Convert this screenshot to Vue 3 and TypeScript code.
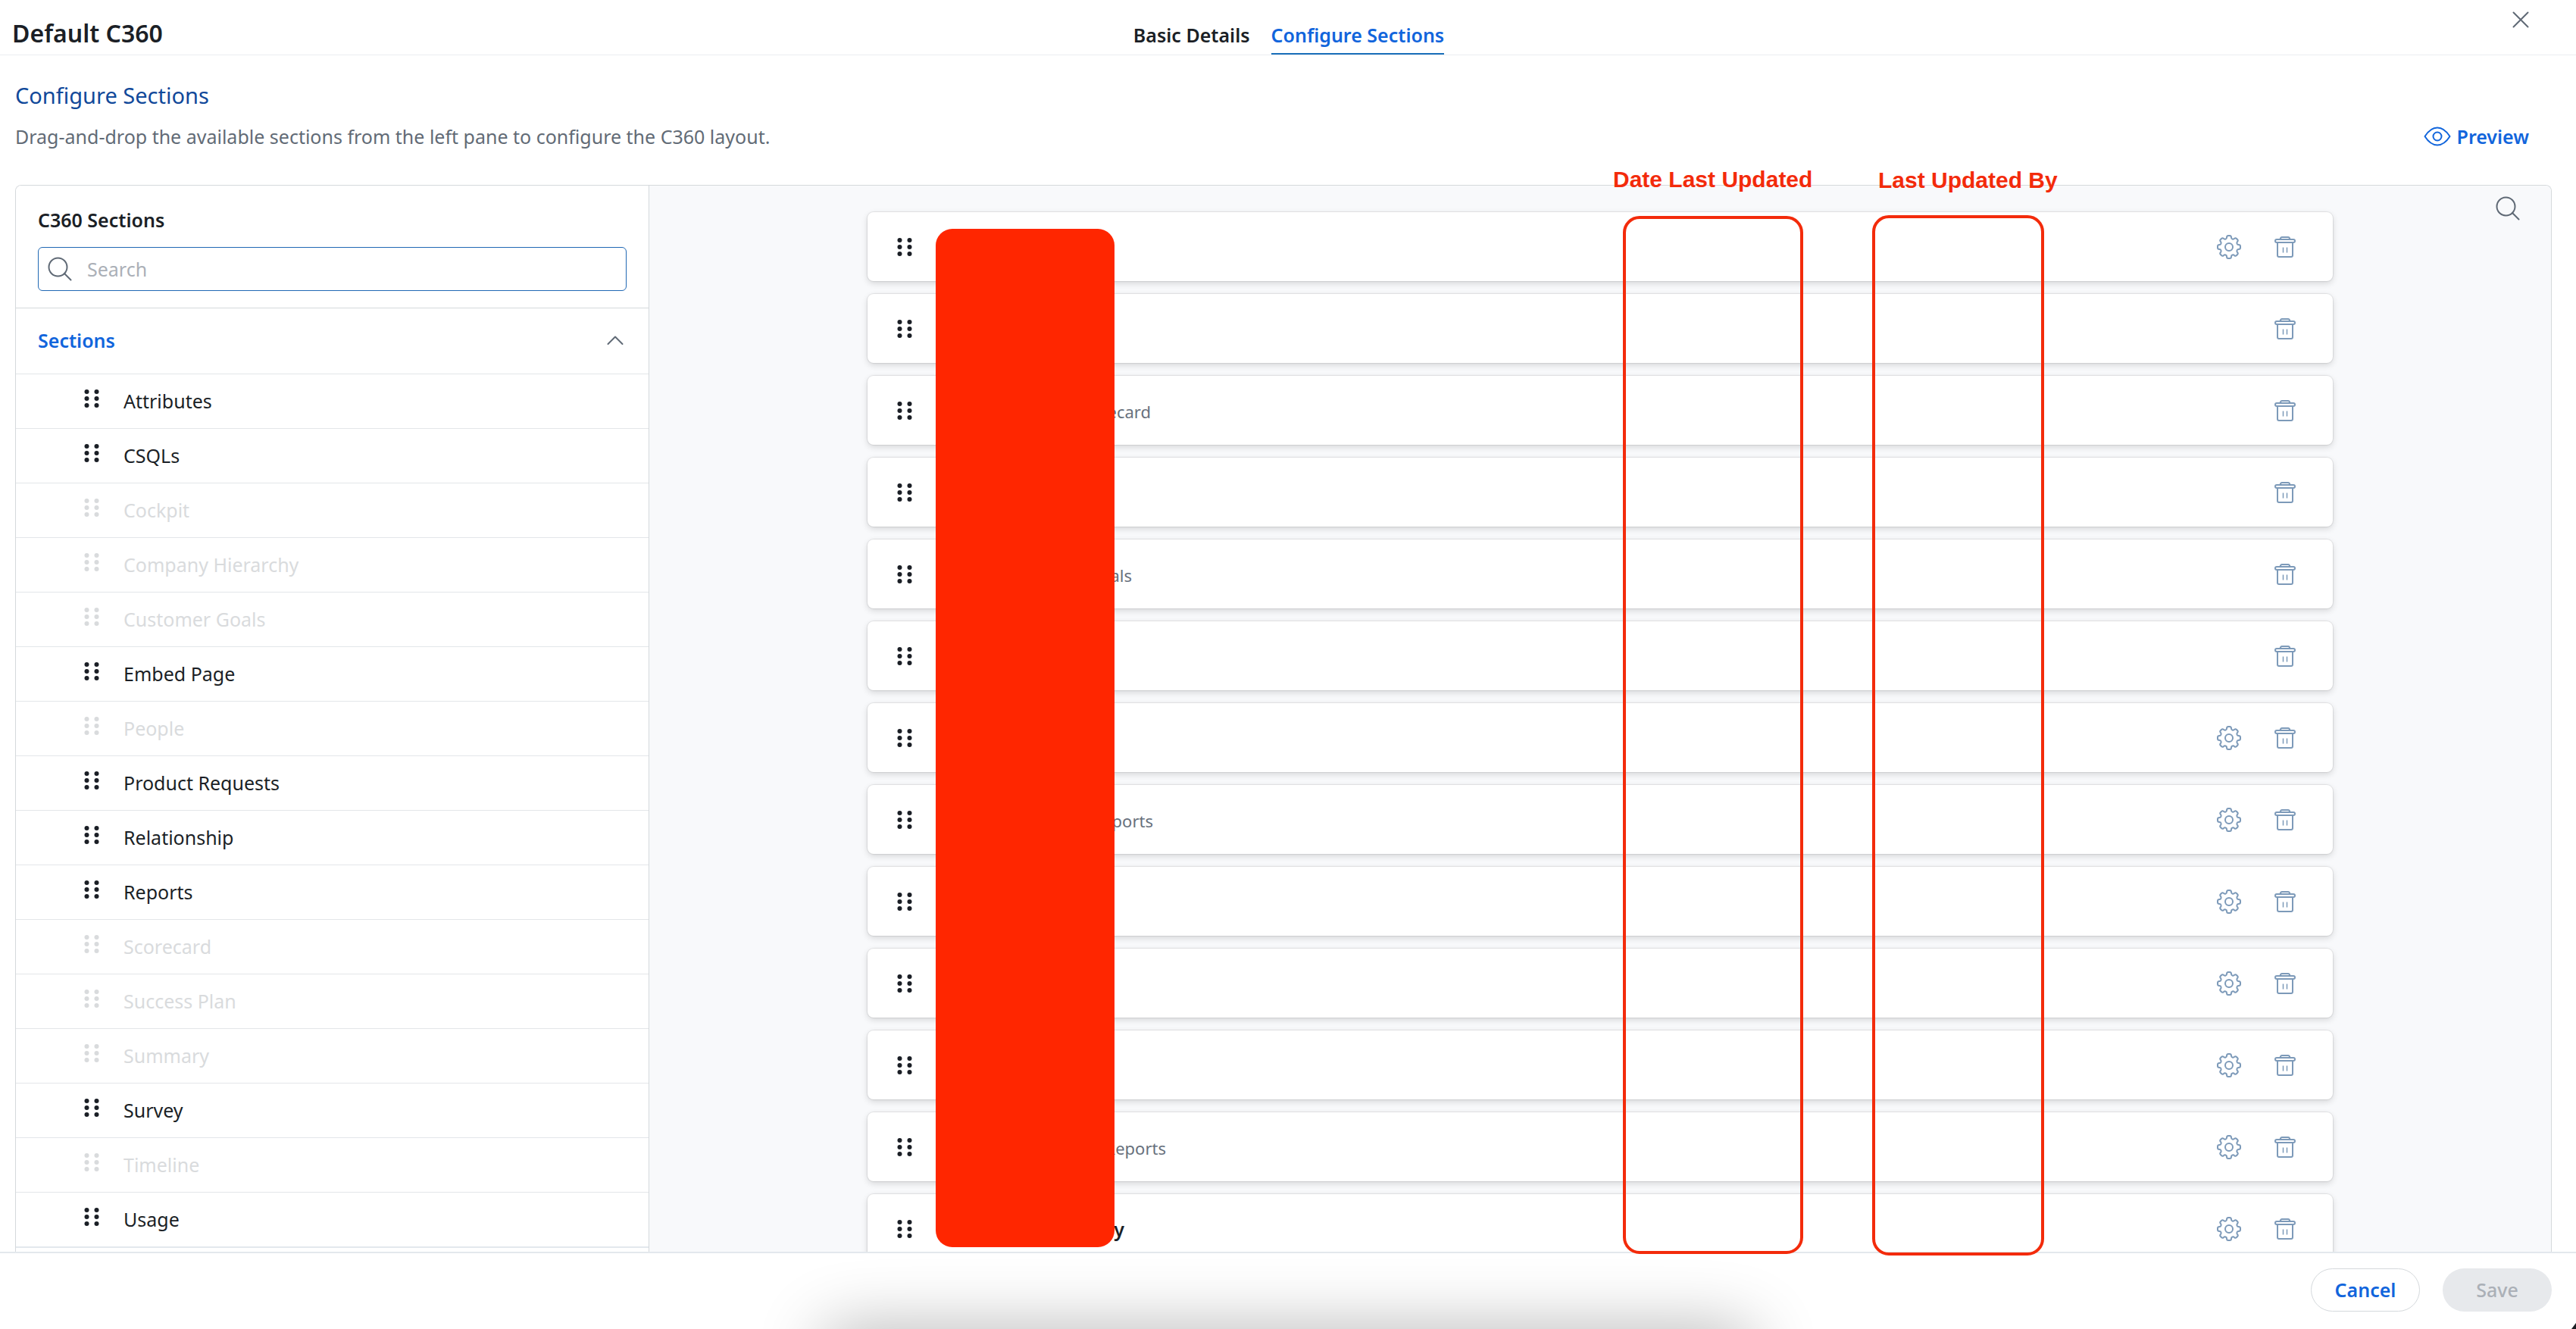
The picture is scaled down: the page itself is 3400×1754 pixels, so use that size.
<script setup lang="ts">
import { ref } from 'vue'

interface Section {
  name: string
  used: boolean
}

interface Card {
  id: number
  label: string
  kind: 'title' | 'note'
  extent: number
  configurable: boolean
}

const query = ref('')

const sections: Section[] = [
  { name: 'Attributes', used: false },
  { name: 'CSQLs', used: false },
  { name: 'Cockpit', used: true },
  { name: 'Company Hierarchy', used: true },
  { name: 'Customer Goals', used: true },
  { name: 'Embed Page', used: false },
  { name: 'People', used: true },
  { name: 'Product Requests', used: false },
  { name: 'Relationship', used: false },
  { name: 'Reports', used: false },
  { name: 'Scorecard', used: true },
  { name: 'Success Plan', used: true },
  { name: 'Summary', used: true },
  { name: 'Survey', used: false },
  { name: 'Timeline', used: true },
  { name: 'Usage', used: false },
]

// extent is the full width of the card's name, including the covered part
const cards: Card[] = [
  { id: 1, label: '', kind: 'note', extent: 0, configurable: true },
  { id: 2, label: '', kind: 'note', extent: 0, configurable: false },
  { id: 3, label: 'ecard', kind: 'note', extent: 273, configurable: false },
  { id: 4, label: '', kind: 'note', extent: 0, configurable: false },
  { id: 5, label: 'als', kind: 'note', extent: 248, configurable: false },
  { id: 6, label: '', kind: 'note', extent: 0, configurable: false },
  { id: 7, label: '', kind: 'note', extent: 0, configurable: true },
  { id: 8, label: 'ports', kind: 'note', extent: 276, configurable: true },
  { id: 9, label: '', kind: 'note', extent: 0, configurable: true },
  { id: 10, label: '', kind: 'note', extent: 0, configurable: true },
  { id: 11, label: '', kind: 'note', extent: 0, configurable: true },
  { id: 12, label: 'Reports', kind: 'note', extent: 293, configurable: true },
  { id: 13, label: 'y', kind: 'title', extent: 238, configurable: true },
]
</script>

<template>
  <div class="page">
    <header class="topbar">
      <h1>Default C360</h1>
      <nav class="tabs">
        <a href="#basic">Basic Details</a>
        <a href="#configure" class="active">Configure Sections</a>
      </nav>
      <button class="icon-btn close" type="button" aria-label="Close">
        <svg width="22" height="22" viewBox="0 0 22 22" fill="none" stroke="currentColor" stroke-width="2" stroke-linecap="round"><path d="M1.5 1.5l19 19M20.5 1.5l-19 19" /></svg>
      </button>
    </header>

    <section class="intro">
      <div>
        <h2>Configure Sections</h2>
        <p>Drag-and-drop the available sections from the left pane to configure the C360 layout.</p>
      </div>
      <button class="preview" type="button">
        <svg width="36" height="26" viewBox="0 0 36 26" fill="none" stroke="currentColor" stroke-width="2" stroke-linejoin="round">
          <path d="M1.5 13C5 7.500 10.500 1.500 18 1.500S31 7.500 34.500 13C31 18.500 25.500 24.500 18 24.500S5 18.500 1.500 13z" />
          <circle cx="18" cy="13" r="5.500" />
        </svg>
        Preview
      </button>
    </section>

    <main class="builder">
      <aside class="sidebar">
        <div class="finder">
          <label for="section-search">C360 Sections</label>
          <div class="search">
            <svg width="32" height="32" viewBox="0 0 32 32" fill="none" stroke="currentColor" stroke-width="2" stroke-linecap="round"><circle cx="13.500" cy="13.500" r="12" /><path d="M22 22l8.500 8.500" /></svg>
            <input id="section-search" v-model="query" type="text" placeholder="Search" />
          </div>
        </div>
        <button class="group" type="button">
          Sections
          <svg width="24" height="14" viewBox="0 0 24 14" fill="none" stroke="currentColor" stroke-width="2" stroke-linecap="round" stroke-linejoin="round"><path d="M2.500 12L12 2.500 21.500 12" /></svg>
        </button>
        <ul class="sections">
          <li v-for="s in sections" :key="s.name" :class="{ used: s.used }">
            <svg class="grip" width="20" height="24" viewBox="0 0 20 24" fill="currentColor"><circle cx="3.500" cy="3" r="3" /><circle cx="16.500" cy="3" r="3" /><circle cx="3.500" cy="12" r="3" /><circle cx="16.500" cy="12" r="3" /><circle cx="3.500" cy="21" r="3" /><circle cx="16.500" cy="21" r="3" /></svg>
            <span>{{ s.name }}</span>
          </li>
        </ul>
      </aside>

      <div class="canvas">
        <button class="icon-btn find" type="button" aria-label="Search layout">
          <svg width="32" height="32" viewBox="0 0 32 32" fill="none" stroke="currentColor" stroke-width="2" stroke-linecap="round"><circle cx="13.500" cy="13.500" r="12" /><path d="M22 22l8.500 8.500" /></svg>
        </button>
        <div class="cards">
          <article v-for="c in cards" :key="c.id" class="card">
            <svg class="grip" width="20" height="24" viewBox="0 0 20 24" fill="currentColor"><circle cx="3.500" cy="3" r="3" /><circle cx="16.500" cy="3" r="3" /><circle cx="3.500" cy="12" r="3" /><circle cx="16.500" cy="12" r="3" /><circle cx="3.500" cy="21" r="3" /><circle cx="16.500" cy="21" r="3" /></svg>
            <span class="label" :class="c.kind" :style="{ width: c.extent + 'px' }">{{ c.label }}</span>
            <div class="tools">
              <button v-if="c.configurable" class="icon-btn" type="button" aria-label="Settings">
                <svg width="34" height="34" viewBox="0 0 34 34" fill="none" stroke="currentColor" stroke-width="2" stroke-linejoin="round">
                  <path d="M14 4.500Q14 2 16 2H18Q20 2 20 4.500Q20 6 21.500 6.500Q23 7 24.200 5.800Q25.600 4.600 27 6L28 7Q29.400 8.400 28.200 9.800Q27 11 27.500 12.500Q28 14 29.500 14Q32 14 32 16V18Q32 20 29.500 20Q28 20 27.500 21.500Q27 23 28.200 24.200Q29.400 25.600 28 27L27 28Q25.600 29.400 24.200 28.200Q23 27 21.500 27.500Q20 28 20 29.500Q20 32 18 32H16Q14 32 14 29.500Q14 28 12.500 27.500Q11 27 9.800 28.200Q8.400 29.400 7 28L6 27Q4.600 25.600 5.800 24.200Q7 23 6.500 21.500Q6 20 4.500 20Q2 20 2 18V16Q2 14 4.500 14Q6 14 6.500 12.500Q7 11 5.800 9.800Q4.600 8.400 6 7L7 6Q8.400 4.600 9.800 5.800Q11 7 12.500 6.500Q14 6 14 4.500Z" />
                  <circle cx="17" cy="17" r="5" />
                </svg>
              </button>
              <button class="icon-btn" type="button" aria-label="Delete">
                <svg width="30" height="30" viewBox="0 0 30 30" fill="none" stroke="currentColor" stroke-width="2" stroke-linejoin="round">
                  <rect x="2" y="5" width="26" height="4" rx="2" />
                  <path d="M8.500 5Q9 2 11 2H19Q21 2 21.500 5" />
                  <path d="M5 9V26Q5 28 7 28H23Q25 28 25 26V9" />
                  <path d="M12.500 15.500V22.500M17.500 15.500V22.500" stroke-width="1.500" />
                </svg>
              </button>
            </div>
          </article>
        </div>
      </div>
    </main>

    <footer class="actions">
      <button class="pill cancel" type="button">Cancel</button>
      <button class="pill save" type="button" disabled>Save</button>
    </footer>

    <!-- Markup drawn over the page -->
    <div class="redaction"></div>
    <strong class="note-text date">Date Last Updated</strong>
    <strong class="note-text author">Last Updated By</strong>
    <div class="frame date-frame"></div>
    <div class="frame author-frame"></div>
    <svg class="corner" width="6" height="8" viewBox="0 0 6 8" fill="#1b1f24"><path d="M6 0V8H0Z" /></svg>
  </div>
</template>

<style>
body {
  margin: 0;
  background: #fff;
}
</style>

<style scoped>
.page {
  position: relative;
  display: flex;
  flex-direction: column;
  height: 100vh;
  overflow: hidden;
  font-family: 'Noto Sans', sans-serif;
  font-size: 25px;
  line-height: 36px;
  color: #1b1f26;
}

h1,
h2,
p,
ul {
  margin: 0;
  padding: 0;
}

button {
  font: inherit;
  color: inherit;
  background: none;
  border: 0;
  padding: 0;
  cursor: pointer;
}

svg {
  display: block;
  flex: none;
}

.topbar {
  display: grid;
  grid-template-columns: 1fr auto 1fr;
  height: 72px;
  flex: none;
  padding: 0 60px 0 16px;
  border-bottom: 1px solid #ebedf0;
}

h1 {
  padding-top: 22px;
  font-size: 32px;
  line-height: 44px;
  font-weight: 600;
}

.tabs {
  display: flex;
  gap: 28px;
  align-items: flex-end;
  padding-left: 46px;
}

.tabs a {
  padding-bottom: 6px;
  border-bottom: 2px solid transparent;
  color: inherit;
  font-weight: 600;
  text-decoration: none;
}

.tabs .active {
  color: #1165dc;
  border-color: #1a6fba;
}

.icon-btn {
  color: #5f6975;
}

.close {
  justify-self: end;
  align-self: start;
  padding: 15px 2px;
}

.intro {
  display: flex;
  justify-content: space-between;
  align-items: flex-end;
  flex: none;
  height: 125px;
  box-sizing: border-box;
  padding: 0 62px 0 20px;
  margin-bottom: 46px;
}

h2 {
  font-size: 29px;
  line-height: 40px;
  font-weight: 400;
  color: #11499a;
  margin-bottom: 16px;
}

p {
  color: #626b76;
}

.preview {
  display: flex;
  align-items: center;
  gap: 8px;
  font-weight: 600;
  color: #1165dc;
}

.builder {
  display: flex;
  flex: 1;
  min-height: 0;
  margin: 0 32px 0 20px;
  border: 1px solid #d5d9dc;
  border-bottom: 0;
  border-radius: 8px 8px 0 0;
  overflow: hidden;
}

.sidebar {
  flex: none;
  width: 835px;
  border-right: 1px solid #d5d9dc;
  background: #fff;
}

.finder {
  padding: 27px 29px 22px;
  border-bottom: 1px solid #d5d9dc;
}

.finder label {
  display: block;
  font-weight: 600;
  margin-bottom: 18px;
}

.search {
  display: flex;
  align-items: center;
  gap: 20px;
  height: 56px;
  padding: 0 12px;
  border: 1px solid #2068b4;
  border-radius: 6px;
  color: #5f6975;
}

.search input {
  flex: 1;
  min-width: 0;
  border: 0;
  outline: 0;
  padding: 0;
  font: inherit;
  background: none;
}

.search input::placeholder {
  color: #abb0b7;
}

.group {
  display: flex;
  align-items: center;
  justify-content: space-between;
  width: 100%;
  height: 86px;
  padding: 0 32px 2px 29px;
  color: #1165dc;
  font-weight: 600;
}

.group svg {
  color: #5f6975;
}

.sections {
  list-style: none;
  border-bottom: 2px solid #e3e8ed;
}

.sections li {
  display: flex;
  align-items: center;
  gap: 32px;
  height: 71px;
  padding-left: 90px;
  border-top: 1px solid #e3e6e9;
}

.sections .grip {
  margin-bottom: 8px;
}

.sections span {
  padding-bottom: 2px;
}

.sections .used {
  color: #d9dbdd;
}

.canvas {
  position: relative;
  flex: 1;
  min-width: 0;
  background: #f8f9fb;
}

.find {
  position: absolute;
  top: 14px;
  right: 41px;
}

.cards {
  display: flex;
  flex-direction: column;
  gap: 17px;
  padding: 35px 288px 0;
}

.card {
  display: flex;
  align-items: center;
  gap: 42px;
  height: 91px;
  padding: 0 48px 0 39px;
  background: #fff;
  border-radius: 8px;
  box-shadow: 0 0 1px 1px rgba(0, 0, 0, 0.08), 0 3px 8px rgba(0, 0, 0, 0.14);
}

.tools {
  display: flex;
  align-items: center;
  gap: 42px;
  margin-left: auto;
}

.card .icon-btn {
  color: #7d9ab9;
}

.label {
  text-align: right;
  white-space: nowrap;
}

.note {
  padding-top: 2px;
  font-size: 22px;
  color: #68717d;
}

.title {
  font-weight: 600;
}

.actions {
  position: relative;
  display: flex;
  justify-content: flex-end;
  align-items: center;
  gap: 30px;
  flex: none;
  height: 96px;
  padding: 0 32px 4px 0;
  border-top: 2px solid #e3e8ed;
}

.actions::before {
  content: '';
  position: absolute;
  top: 100%;
  left: 32%;
  right: 32%;
  height: 80px;
  border-radius: 20px;
  box-shadow: 0 0 88px rgba(0, 0, 0, 0.3);
}

.pill {
  box-sizing: border-box;
  width: 144px;
  height: 57px;
  border-radius: 29px;
}

.cancel {
  border: 1px solid #d5d9dc;
  color: #1165dc;
  font-weight: 600;
}

.save {
  background: #e7e9ec;
  color: #abb0b7;
  font-weight: 500;
}

.redaction,
.note-text,
.frame,
.corner {
  position: absolute;
}

.redaction {
  top: 302px;
  bottom: 108px;
  left: 1235px;
  width: 236px;
  border-radius: 22px;
  background: #ff2600;
}

.note-text {
  font: bold 30px/36px 'Liberation Sans', sans-serif;
  color: #f32b0b;
  white-space: nowrap;
}

.date {
  top: 219px;
  left: 2129px;
}

.author {
  top: 220px;
  left: 2479px;
}

.frame {
  box-sizing: border-box;
  border: 4px solid #f32b0b;
  border-radius: 22px;
}

.date-frame {
  top: 285px;
  bottom: 99px;
  left: 2142px;
  width: 238px;
}

.author-frame {
  top: 284px;
  bottom: 97px;
  left: 2471px;
  width: 227px;
}

.corner {
  right: 0;
  bottom: 0;
}
</style>
